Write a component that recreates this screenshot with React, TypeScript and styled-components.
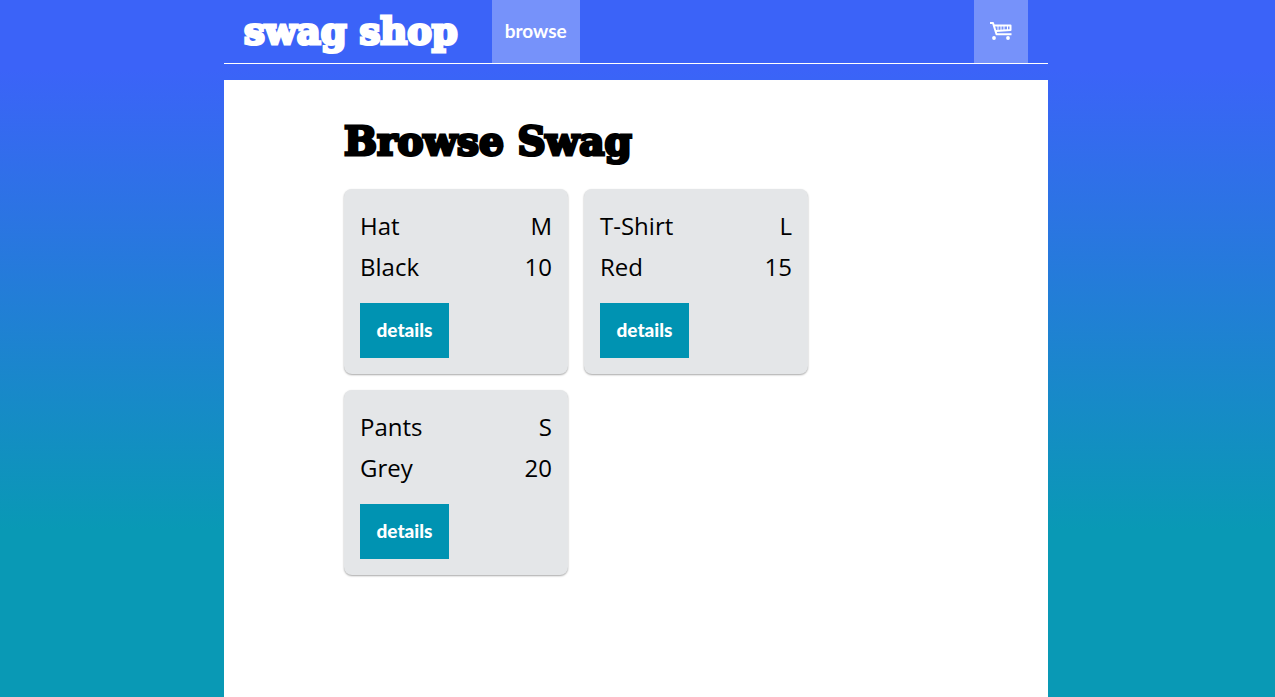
import React from "react";
import styled, { createGlobalStyle } from "styled-components";

const display = `"DejaVu Serif", "Liberation Serif", serif`;
const sans = `"Open Sans", "Noto Sans", sans-serif`;
const label = `Lato, "Open Sans", sans-serif`;

const GlobalStyle = createGlobalStyle`
  *, *::before, *::after { box-sizing: border-box; }
  body {
    margin: 0;
    color: #000;
    font-family: ${sans};
    font-size: 24px;
    line-height: 41px;
  }
`;

const Page = styled.div`
  display: flex;
  justify-content: center;
  min-height: 100vh;
  padding-right: 3px;
  background: linear-gradient(180deg, #3b63f8 10%, #0999b5 76%);
`;

const Shell = styled.div`
  display: flex;
  flex-direction: column;
  gap: 16px;
  width: 100%;
  max-width: 824px;
`;

const Header = styled.header`
  display: flex;
  min-height: 64px;
  padding: 0 20px;
  border-bottom: 1px solid #fff;
`;

const Logo = styled.a`
  display: flex;
  align-items: center;
  color: #fff;
  font-family: ${display};
  font-size: 37px;
  font-weight: 700;
  white-space: nowrap;
  text-decoration: none;
  -webkit-text-stroke: 3px #fff;
`;

const Nav = styled.nav`
  display: flex;
  flex: 1;
  justify-content: space-between;
  margin-left: 34px;
`;

const NavLink = styled.a<{ $width: number }>`
  display: flex;
  align-items: center;
  justify-content: center;
  min-width: ${(p) => p.$width}px;
  padding-bottom: 2px;
  background: rgba(255, 255, 255, 0.3);
  color: #fff;
  font-family: ${label};
  font-size: 19px;
  font-weight: 700;
  text-decoration: none;
`;

const Main = styled.main`
  flex: 1;
  padding: 32px 120px;
  background: #fff;
`;

const Title = styled.h1`
  margin: 0 0 18px;
  font-family: ${display};
  font-size: 39px;
  font-weight: 700;
  line-height: 59px;
  -webkit-text-stroke: 3px #000;
`;

const Grid = styled.ul`
  display: grid;
  grid-template-columns: repeat(auto-fill, 224px);
  gap: 16px;
  max-width: 480px;
  margin: 0;
  padding: 0;
  list-style: none;
`;

const Card = styled.li`
  padding: 16px;
  border-radius: 8px;
  background: #e4e6e8;
  box-shadow: 0 1px 2px rgba(0, 0, 0, 0.35);
`;

const Row = styled.div`
  display: flex;
  justify-content: space-between;
`;

const DetailsButton = styled.button`
  display: block;
  min-width: 89px;
  margin-top: 16px;
  padding: 14px 0 16px;
  border: 0;
  background: #0093b2;
  color: #fff;
  font-family: ${label};
  font-size: 19px;
  font-weight: 900;
  line-height: 25px;
  cursor: pointer;
`;

const CartIcon = () => (
  <svg width="24" height="20" viewBox="0 0 24 20" fill="none" stroke="#fff" aria-hidden="true">
    <path d="M1 2h3l3.500 11.300H22.500" strokeWidth="2" strokeLinejoin="round" />
    <path d="M5 4.500h16.500v4.500L7 10" strokeWidth="2" strokeLinejoin="round" />
    <path d="M9 4v6M12 4v6M15 4v6M18.500 4v6" strokeWidth="1" />
    <circle cx="5" cy="17" r="1.900" fill="#fff" stroke="none" />
    <circle cx="19" cy="17" r="1.900" fill="#fff" stroke="none" />
  </svg>
);

const swag = [
  { name: "Hat", size: "M", color: "Black", price: 10 },
  { name: "T-Shirt", size: "L", color: "Red", price: 15 },
  { name: "Pants", size: "S", color: "Grey", price: 20 },
];

export default function App() {
  return (
    <>
      <GlobalStyle />
      <Page>
        <Shell>
          <Header>
            <Logo href="#">swag shop</Logo>
            <Nav>
              <NavLink href="#browse" $width={88}>browse</NavLink>
              <NavLink href="#cart" $width={54} aria-label="Cart">
                <CartIcon />
              </NavLink>
            </Nav>
          </Header>
          <Main>
            <Title>Browse Swag</Title>
            <Grid>
              {swag.map((item) => (
                <Card key={item.name}>
                  <Row>
                    <span>{item.name}</span>
                    <span>{item.size}</span>
                  </Row>
                  <Row>
                    <span>{item.color}</span>
                    <span>{item.price}</span>
                  </Row>
                  <DetailsButton type="button">details</DetailsButton>
                </Card>
              ))}
            </Grid>
          </Main>
        </Shell>
      </Page>
    </>
  );
}
